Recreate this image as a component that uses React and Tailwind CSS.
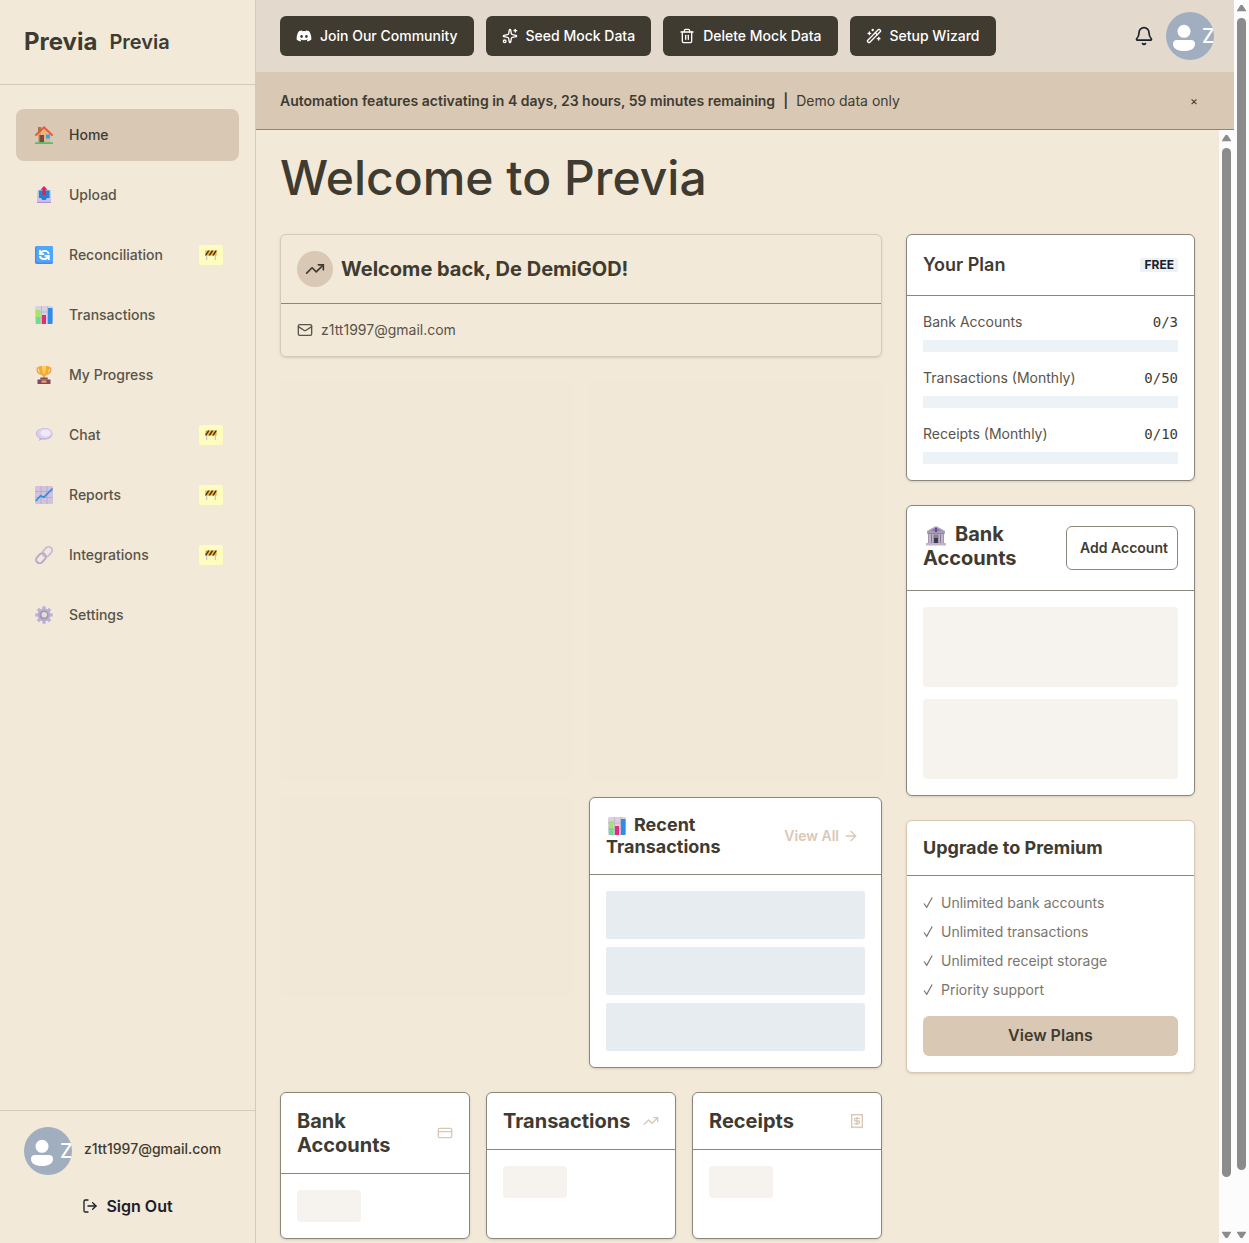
import React from "react";
import {
  ArrowRight,
  Bell,
  CreditCard,
  LogOut,
  Mail,
  Receipt,
  Sparkles,
  Trash2,
  TrendingUp,
  WandSparkles,
} from "lucide-react";
import { FaDiscord } from "react-icons/fa";

/* ---------- pictograms ---------- */

function House() {
  return (
    <svg viewBox="0 0 18 18" className="size-[18px]" aria-hidden="true">
      <path d="M3 1h3.200v6H3z" fill="#a5764f" />
      <path d="M3 8.500 9 2.500l6.200 6V16.500H3z" fill="#eab27c" />
      <path d="M3 8.500 6 6v10.500H3z" fill="#d6a06d" />
      <path d="M4.500 9h4.500v7.500H4.500z" fill="#7c4a45" />
      <path d="M11 8.500h4v4h-4z" fill="#2fa8ee" />
      <path d="M1 9 9 1.300 17 9" fill="none" stroke="#e8583c" strokeWidth="1.900" strokeLinecap="round" />
      <rect x="0" y="16.200" width="18" height="1.800" rx=".6" fill="#3cc878" />
    </svg>
  );
}
function Outbox() {
  return (
    <svg viewBox="0 0 18 18" className="size-[18px]" aria-hidden="true">
      <path d="M2.500 4h13L16 13H2z" fill="#b8c4e6" />
      <path d="M4 4.500h10.500V14H4z" fill="#1f83d8" />
      <path d="M2 12h4l1.300 2h3.400L12 12h4v5H2z" fill="#cdc0ea" />
      <path d="M2 15.800h14V17H2z" fill="#a994d4" />
      <path d="M9 0 12.500 3.800h-2V9h-3V3.800h-2z" fill="#dc2358" />
    </svg>
  );
}
function Cycle() {
  return (
    <svg viewBox="0 0 18 18" className="size-[18px]" aria-hidden="true">
      <rect width="18" height="18" rx="1.800" fill="#4b86ea" />
      <rect x="1.200" width="16.800" height="16.500" rx="1.800" fill="#4fa6fa" />
      <path d="M5 4v4.200h4.200" fill="none" stroke="#fff" strokeWidth="1.800" />
      <path d="M5.400 7.800C7 4.200 12.500 3.800 13.800 8" fill="none" stroke="#fff" strokeWidth="1.800" />
      <path d="M13.800 14V9.800H9.600" fill="none" stroke="#fff" strokeWidth="1.800" />
      <path d="M13.200 10.500C11.500 14 6 14.200 4.800 10" fill="none" stroke="#fff" strokeWidth="1.800" />
    </svg>
  );
}
function Bars() {
  return (
    <svg viewBox="0 0 18 18" className="inline-block size-[18px]" aria-hidden="true">
      <rect width="18" height="18" rx="1.500" fill="#d9d0e2" />
      <path d="M0 6h18M0 12h18M6.500 0v18M12.500 0v18" stroke="#b9aec8" strokeWidth=".7" />
      <path d="M1 4h4.500v14H2a1 1 0 0 1-1-1z" fill="#a4e468" />
      <path d="M1 11h4.500v7H2a1 1 0 0 1-1-1z" fill="#6fdc92" />
      <path d="M7 9h4v9H7z" fill="#e62c78" />
      <path d="M13 2h4.500v15a1 1 0 0 1-1 1H13z" fill="#2d8ee4" />
    </svg>
  );
}
function Trophy() {
  return (
    <svg viewBox="0 0 18 18" className="size-[18px]" aria-hidden="true">
      <path d="M4.500 2H2.300C2 5 3 7.500 6 8M13.500 2h2.200C16 5 15 7.500 12 8" fill="none" stroke="#f0a440" strokeWidth="1.400" />
      <path d="M4 0h10c.4 5-1 9-4 10v2.500H8V10C5 9 3.600 5 4 0z" fill="#f6a93b" />
      <path d="M7 0h4c.2 4-.4 7-2 8.500C7.400 7 6.800 4 7 0z" fill="#ffcf58" />
      <path d="M5.500 11.500h7l.5 2H5z" fill="#8a4a5d" />
      <path d="M2.500 13.500h13V18h-13z" fill="#84485c" />
      <path d="M6.500 14.600h5v2h-5z" fill="#f2b14a" />
    </svg>
  );
}
function Speech() {
  return (
    <svg viewBox="0 0 18 18" className="size-[18px]" aria-hidden="true">
      <path d="M9.500 2c4.700 0 8 2.400 8 5.800s-3.300 5.900-8 5.900c-1 0-1.900-.1-2.700-.3L3.800 15l.8-2.700C2.300 11.300 1 9.700 1 7.800 1 4.400 4.800 2 9.500 2z" fill="#c4b2e2" />
      <path d="M9.500 2.400c4.600 0 7.400 2 7.400 4.900s-3 5-7.400 5-7.400-2-7.400-5 3-4.900 7.400-4.900z" fill="#ddd2ee" />
      <ellipse cx="10.500" cy="7" rx="5" ry="3.500" fill="#efe9f6" />
    </svg>
  );
}
function LineChart() {
  return (
    <svg viewBox="0 0 18 18" className="size-[18px]" aria-hidden="true">
      <rect width="18" height="18" rx="1.500" fill="#cfc3de" />
      <path d="M0 5.500h18M0 11.500h18M6 0v18M12 0v18" stroke="#b3a5c8" strokeWidth=".7" />
      <path d="M.8 15 5.500 9.800l3.500 1.400L17.500 2.500" fill="none" stroke="#2f8fdc" strokeWidth="1.700" />
    </svg>
  );
}
function Chain() {
  return (
    <svg viewBox="0 0 18 18" className="size-[18px]" aria-hidden="true">
      <g fill="none" strokeWidth="1.900">
        <rect x="-5.500" y="-3.500" width="11" height="7" rx="3.500" transform="translate(12.300 5.800) rotate(-48)" stroke="#cbbcd6" />
        <rect x="-5.500" y="-3.500" width="11" height="7" rx="3.500" transform="translate(6 12.200) rotate(-48)" stroke="#b8a8c6" />
      </g>
    </svg>
  );
}
function Gear() {
  return (
    <svg viewBox="0 0 18 18" className="size-[18px]" aria-hidden="true">
      <g stroke="#bcade0" strokeWidth="3.200">
        <path d="M9 .3v17.400M.3 9h17.400M2.900 2.900l12.200 12.200M15.100 2.900 2.900 15.100" />
      </g>
      <circle cx="9" cy="9" r="6.500" fill="#bcb0d2" />
      <circle cx="9" cy="9" r="4.600" fill="#a196b2" />
      <circle cx="9.300" cy="8.800" r="2.800" fill="#e6dbd6" />
    </svg>
  );
}
function BankBuilding() {
  return (
    <svg viewBox="0 0 20 20" className="inline-block size-5" aria-hidden="true">
      <path d="M10 0 19 5v2H1V5z" fill="#a79db5" />
      <path d="M10 1.500 15 5H5z" fill="#8a7fa0" />
      <path d="M9 2h2v4H9z" fill="#6d3fb0" />
      <path d="M1.500 7h17v1.500h-17z" fill="#8e849c" />
      <path d="M2 8.500h16V17H2z" fill="#857b92" />
      <path d="M2.500 8.500H5V17H2.500zM6 8.500h1.500V17H6zM12.500 8.500H14V17h-1.500zM15 8.500h2.500V17H15z" fill="#c0b6cc" />
      <path d="M8 12h4v5H8z" fill="#40384c" />
      <path d="M0 17h20v2.500H0z" fill="#c0b4cf" />
    </svg>
  );
}
function Barrier() {
  return (
    <svg viewBox="0 0 12 12" className="size-3" aria-hidden="true">
      <path d="M1.700 4v7M10.300 4v7" stroke="#c8b6d4" strokeWidth="1" />
      <rect x=".3" y="1.500" width="11.400" height="5" fill="#f2b33a" />
      <path d="M.3 5.500 3 1.500h1.700L1.300 6.500h-1zM3.500 6.500l3.200-5h1.700l-3.200 5zM7.200 6.500l3.200-5h1.300v.5L8.900 6.500z" fill="#41302f" />
    </svg>
  );
}
function Person() {
  return (
    <svg viewBox="0 0 36 48" className="h-12 w-9 shrink-0" fill="#fff" aria-hidden="true">
      <circle cx="18" cy="19.300" r="6.500" />
      <path d="M11 28h14a4 4 0 0 1 4 4c0 4.500-4.500 7-11 7s-11-2.500-11-7a4 4 0 0 1 4-4z" />
    </svg>
  );
}
function Tick() {
  return (
    <svg viewBox="0 0 10 21" className="h-[21px] w-2.5 shrink-0" aria-hidden="true">
      <path d="M1 11.500 3.700 15.300 9.200 5.500" fill="none" stroke="currentColor" strokeWidth="1.200" />
    </svg>
  );
}

/* ---------- shared parts ---------- */

function Avatar() {
  return (
    <span className="flex size-12 shrink-0 items-center overflow-hidden rounded-full bg-[#a0aec0] text-xl font-medium text-white">
      <Person />
      <span>Z</span>
    </span>
  );
}

function Card({ tone = "stone", className = "", children }) {
  const border = tone === "sand" ? "border-[#d9c8b4]" : "border-[#8c877d]";
  return <section className={`rounded-md border shadow-sm ${border} ${className}`}>{children}</section>;
}

function Arrow({ down }) {
  return (
    <svg viewBox="0 0 9 8" className="h-2 w-[9px] shrink-0" fill="#8b8b8b" aria-hidden="true">
      {down ? <path d="M0 1.500V.8h9v.7L5.500 7h-2z" /> : <path d="M0 6.500v.7h9v-.7L5.500 1h-2z" />}
    </svg>
  );
}

function ScrollTrack() {
  return (
    <div className="flex w-[15px] shrink-0 flex-col items-center bg-[#fcfcfc] py-1" aria-hidden="true">
      <Arrow />
      <div className="mt-1.5 w-[9px] flex-1">
        <div className="h-[95%] rounded-full bg-[#8b8b8b]" />
      </div>
      <Arrow down />
    </div>
  );
}

const NAV = [
  { label: "Home", icon: House, active: true },
  { label: "Upload", icon: Outbox },
  { label: "Reconciliation", icon: Cycle, wip: true },
  { label: "Transactions", icon: Bars },
  { label: "My Progress", icon: Trophy },
  { label: "Chat", icon: Speech, wip: true },
  { label: "Reports", icon: LineChart, wip: true },
  { label: "Integrations", icon: Chain, wip: true },
  { label: "Settings", icon: Gear },
];

const ACTIONS = [
  { label: "Join Our Community", icon: FaDiscord },
  { label: "Seed Mock Data", icon: Sparkles },
  { label: "Delete Mock Data", icon: Trash2 },
  { label: "Setup Wizard", icon: WandSparkles },
];

const USAGE = [
  { label: "Bank Accounts", value: "0/3" },
  { label: "Transactions (Monthly)", value: "0/50" },
  { label: "Receipts (Monthly)", value: "0/10" },
];

const PERKS = ["Unlimited bank accounts", "Unlimited transactions", "Unlimited receipt storage", "Priority support"];

const STATS = [
  { label: "Bank Accounts", icon: CreditCard },
  { label: "Transactions", icon: TrendingUp },
  { label: "Receipts", icon: Receipt },
];

function Sidebar() {
  return (
    <aside className="flex w-64 shrink-0 flex-col border-r border-[#d9c8b4]">
      <div className="flex h-[85px] items-center gap-3 border-b border-[#d9c8b4] px-6">
        <span className="text-2xl font-bold">Previa</span>
        <span className="text-xl font-semibold">Previa</span>
      </div>
      <nav className="flex flex-1 flex-col gap-2 px-4 py-6">
        {NAV.map(({ label, icon: Icon, active, wip }) => (
          <a
            key={label}
            href="#"
            className={`flex h-[52px] items-center gap-[13px] rounded-lg px-4 text-sm font-medium ${
              active ? "bg-[#d9c8b4]" : "text-[#595449]"
            }`}
          >
            <span className="flex w-6 justify-center">
              <Icon />
            </span>
            <span className="flex-1">{label}</span>
            {wip && (
              <span className="flex h-5 w-6 items-center justify-center rounded-xs bg-[#fefcbf]">
                <Barrier />
              </span>
            )}
          </a>
        ))}
      </nav>
      <div className="border-t border-[#d9c8b4] px-6 py-4">
        <div className="flex items-center gap-3">
          <Avatar />
          <span className="pb-1 text-sm font-medium">z1tt1997@gmail.com</span>
        </div>
        <button className="mt-3 flex h-10 w-full items-center justify-center gap-2 pb-0.5 font-semibold text-[#1a202c]">
          <LogOut className="size-4" />
          Sign Out
        </button>
      </div>
    </aside>
  );
}

function MainColumn() {
  return (
    <div className="col-span-2 flex flex-col gap-6">
      <Card tone="sand">
        <div className="flex items-center gap-2 border-b border-[#8c877d] p-4">
          <span className="flex size-9 items-center justify-center rounded-full bg-[#d9c8b4]">
            <TrendingUp className="size-5" />
          </span>
          <h2 className="text-xl font-bold">Welcome back, De DemiGOD!</h2>
        </div>
        <div className="flex items-center gap-2 p-4 text-sm text-[#595449]">
          <Mail className="size-4" />
          z1tt1997@gmail.com
        </div>
      </Card>

      <div className="grid grid-cols-2 items-start gap-4">
        <div className="h-[400px] rounded-md bg-[#f1e8d7]" />
        <div className="h-[400px] rounded-md bg-[#f1e8d7]" />
        <div className="h-[200px] rounded-md bg-[#f1e8d7]" />
        <Card className="bg-white">
          <div className="flex items-center justify-between border-b border-[#8c877d] p-4">
            <h3 className="w-32 text-lg/[22px] font-bold">
              <span className="mr-1.5 inline-flex w-[22px] justify-center align-text-bottom">
                <Bars />
              </span>
              Recent Transactions
            </h3>
            <a href="#" className="flex items-center gap-1 pr-1.5 text-sm font-semibold text-[#d9c8b4]">
              View All
              <ArrowRight className="size-4" />
            </a>
          </div>
          <div className="flex flex-col gap-2 p-4">
            <div className="h-12 rounded-xs bg-[#e7ecf0]" />
            <div className="h-12 rounded-xs bg-[#e7ecf0]" />
            <div className="h-12 rounded-xs bg-[#e7ecf0]" />
          </div>
        </Card>
      </div>

      <div className="grid grid-cols-3 gap-4">
        {STATS.map(({ label, icon: Icon }) => (
          <Card key={label} className="bg-white">
            <div className="flex items-center justify-between border-b border-[#8c877d] p-4">
              <h3 className="text-xl/6 font-bold">{label}</h3>
              <Icon className="size-4 shrink-0 text-[#d9c8b4]" />
            </div>
            <div className="p-4">
              <div className="h-8 w-16 rounded-sm bg-[#f6f3ef]" />
            </div>
          </Card>
        ))}
      </div>
    </div>
  );
}

function SideColumn() {
  return (
    <div className="flex flex-col gap-6">
      <Card className="bg-white">
        <div className="flex items-center justify-between border-b border-[#8c877d] p-4">
          <h3 className="text-lg/7 font-semibold">Your Plan</h3>
          <span className="rounded-xs bg-[#edf2f7] px-1 text-xs/[14px] font-bold text-[#1a202c]">FREE</span>
        </div>
        <div className="flex flex-col gap-4 p-4">
          {USAGE.map(({ label, value }) => (
            <div key={label} className="flex flex-col gap-2">
              <div className="flex justify-between text-sm">
                <span className="text-[#595449]">{label}</span>
                <span className="font-['DejaVu_Sans_Mono',monospace]">{value}</span>
              </div>
              <div className="h-3 bg-[#edf2f7]" />
            </div>
          ))}
        </div>
      </Card>

      <Card className="bg-white">
        <div className="flex items-center justify-between border-b border-[#8c877d] p-4">
          <h3 className="min-h-[52px] w-28 text-xl/6 font-bold">
            <span className="mr-1.5 inline-flex w-[26px] justify-center align-text-bottom">
              <BankBuilding />
            </span>
            Bank Accounts
          </h3>
          <button className="h-11 w-28 shrink-0 rounded-md border border-[#8c877d] pl-1 text-sm font-semibold">
            Add Account
          </button>
        </div>
        <div className="flex flex-col gap-3 p-4">
          <div className="h-20 rounded-sm bg-[#f6f3ef]" />
          <div className="h-20 rounded-sm bg-[#f6f3ef]" />
        </div>
      </Card>

      <Card tone="sand" className="bg-white">
        <div className="border-b border-[#8c877d] p-4">
          <h3 className="text-lg/[22px] font-bold">Upgrade to Premium</h3>
        </div>
        <div className="p-4">
          <ul className="flex flex-col gap-2 text-sm/[21px] text-[#79766e]">
            {PERKS.map((perk) => (
              <li key={perk} className="flex gap-2">
                <Tick />
                {perk}
              </li>
            ))}
          </ul>
          <button className="mt-4 h-10 w-full rounded-md bg-[#d9c8b4] pb-0.5 font-semibold">View Plans</button>
        </div>
      </Card>
    </div>
  );
}

export default function App() {
  return (
    <div className="flex h-screen overflow-hidden bg-[#f2e9d8] font-['Inter',sans-serif] text-[#403b31]">
      <Sidebar />
      <div className="flex min-w-0 flex-1 flex-col">
        <header className="flex items-center justify-between bg-[#e3dacd] py-3 pr-5 pl-6">
          <div className="flex gap-3">
            {ACTIONS.map(({ label, icon: Icon }) => (
              <button
                key={label}
                className="flex h-10 items-center gap-2 rounded-md bg-[#403b31] px-4 text-sm font-medium text-white"
              >
                <Icon className="size-4" />
                {label}
              </button>
            ))}
          </div>
          <div className="flex items-center gap-3">
            <button aria-label="Notifications">
              <Bell className="size-5 text-[#1a202c]" />
            </button>
            <Avatar />
          </div>
        </header>
        <div className="flex items-center border-b border-[#8c877d] bg-[#d9c8b4] px-6 text-sm">
          <p className="flex h-[57px] flex-1 items-center gap-2">
            <strong className="font-semibold">Automation features activating in 4 days, 23 hours, 59 minutes remaining</strong>
            <span className="font-semibold">|</span>
            <span>Demo data only</span>
          </p>
          <button aria-label="Dismiss" className="w-8 text-center text-xs">
            ×
          </button>
        </div>
        <div className="flex min-h-0 flex-1">
          <main className="min-w-0 flex-1 overflow-hidden p-6">
            <h1 className="mb-8 text-5xl/[48px] font-medium">Welcome to Previa</h1>
            <div className="grid grid-cols-3 gap-6">
              <MainColumn />
              <SideColumn />
            </div>
          </main>
          <ScrollTrack />
        </div>
      </div>
      <ScrollTrack />
    </div>
  );
}
